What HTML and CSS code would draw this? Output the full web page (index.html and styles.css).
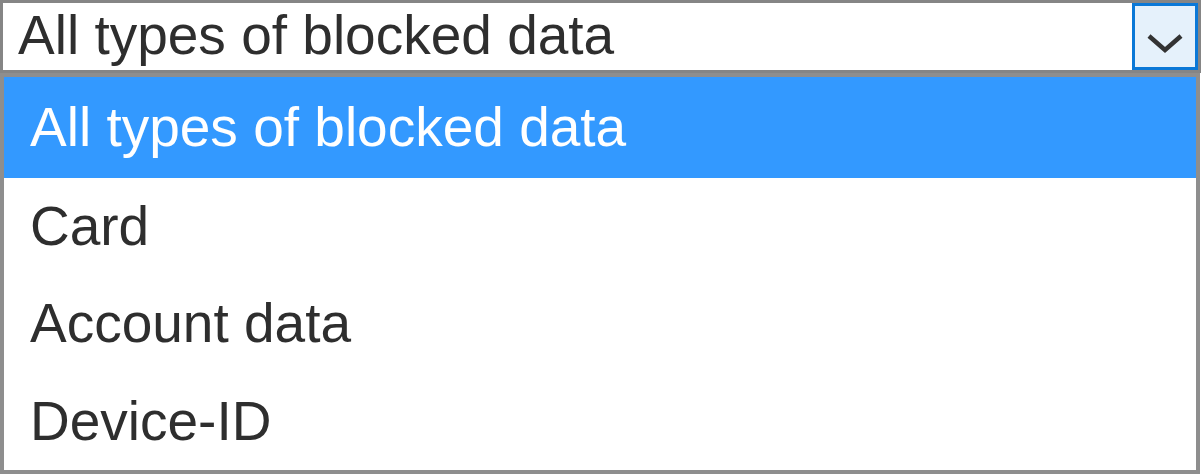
FILE: index.html
```html
<!DOCTYPE html>
<html>
<head>
<meta charset="utf-8">
<link rel="stylesheet" href="styles.css">
</head>
<body>
<div class="combo">
  <div class="select">
    <span class="value">All types of blocked data</span>
    <span class="button">
      <svg width="36" height="20" viewBox="0 0 36 20"><path d="M2 3 L18 17 L34 3" fill="none" stroke="#333" stroke-width="4.5"/></svg>
    </span>
  </div>
  <ul class="list">
    <li class="option selected">All types of blocked data</li>
    <li class="option">Card</li>
    <li class="option">Account data</li>
    <li class="option">Device-ID</li>
  </ul>
</div>
</body>
</html>
```

FILE: styles.css
```css
html, body {
  margin: 0;
  padding: 0;
  background: #fff;
}
.combo {
  width: 1201px;
  height: 475px;
  font-family: "Liberation Sans", Arial, sans-serif;
  font-size: 55px;
  color: #2e2e2e;
}
.select {
  box-sizing: border-box;
  height: 73px;
  width: 1201px;
  border: 3px solid #858585;
  display: flex;
  align-items: stretch;
  background: #fff;
}
.value {
  flex: 1;
  padding-left: 15px;
  display: flex;
  align-items: center;
  line-height: 1;
  padding-bottom: 2px;
}
.button {
  box-sizing: border-box;
  width: 66px;
  border: 3px solid #0a78d7;
  background: #e5f1fb;
  display: flex;
  align-items: center;
  justify-content: center;
  padding-top: 12px;
}
.list {
  list-style: none;
  margin: 0;
  padding: 0;
  box-sizing: border-box;
  width: 1200px;
  height: 401px;
  border: 4px solid #8e8e8e;
  display: flex;
  flex-direction: column;
}
.option {
  flex: 1;
  display: flex;
  align-items: center;
  padding-left: 26px;
  line-height: 1;
}
.option.selected {
  flex: 0 0 101px;
  background: #3399ff;
  color: #fff;
}
```
